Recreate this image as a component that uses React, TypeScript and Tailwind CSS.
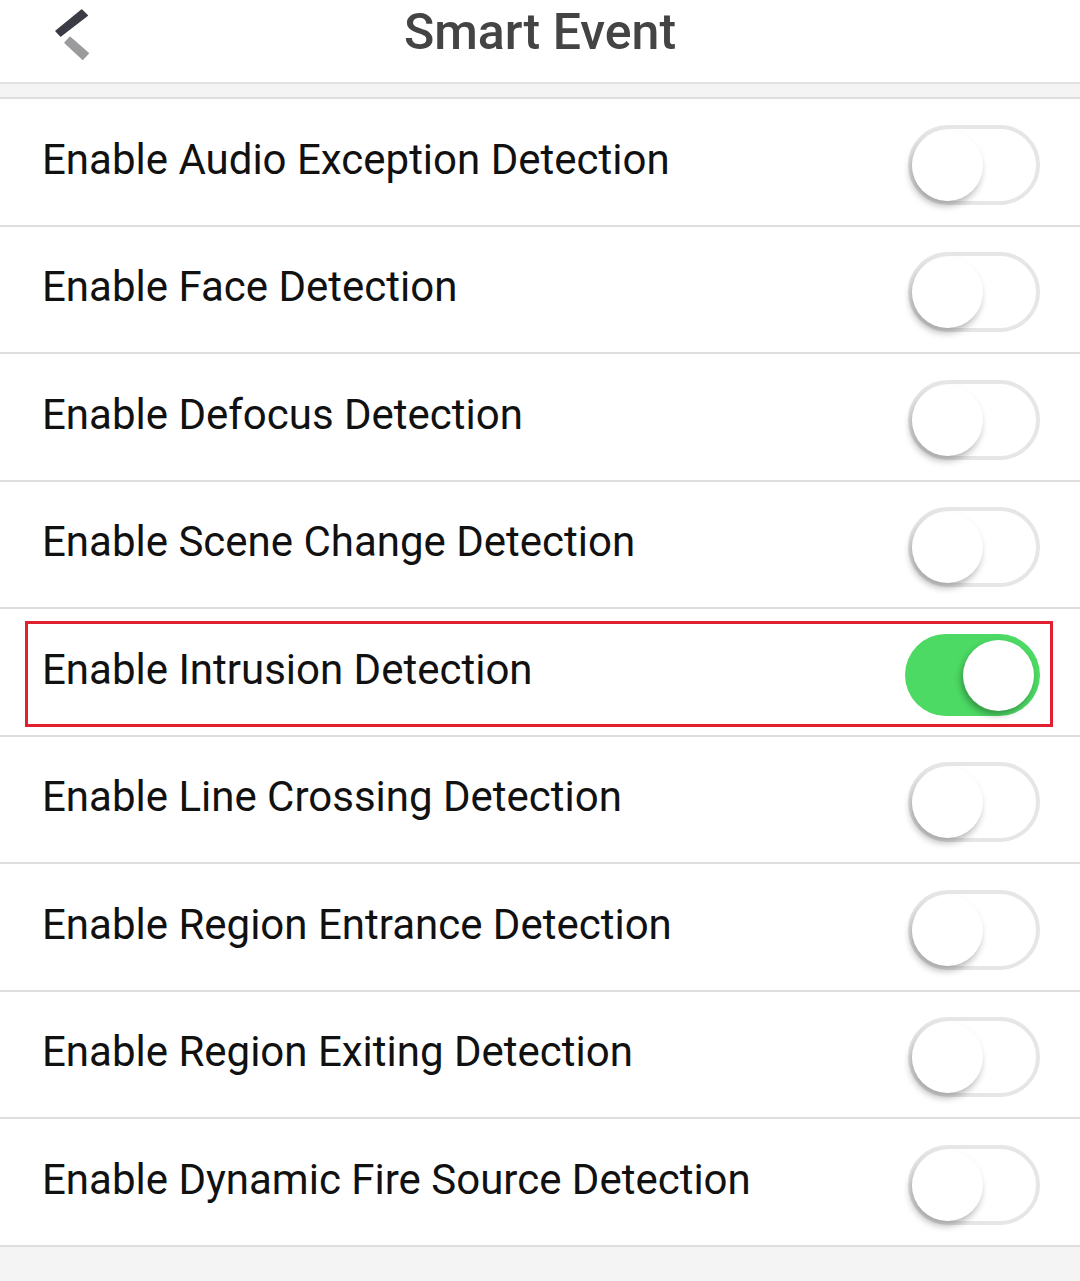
import React from 'react'

interface ToggleProps {
  on: boolean
}

const Toggle: React.FC<ToggleProps> = ({ on }) => {
  if (on) {
    return (
      <div className="relative h-[82px] w-[135px] shrink-0 rounded-full bg-[#4cd964]">
        <div className="absolute right-[6px] top-[6px] h-[71px] w-[71px] rounded-full bg-white shadow-[-2px_4px_6px_rgba(0,0,0,0.3)]" />
      </div>
    )
  }
  return (
    <div className="relative h-[80px] w-[132px] shrink-0 rounded-full border-4 border-[#e6e6e6] bg-white">
      <div className="absolute left-0 top-px h-[71px] w-[71px] rounded-full bg-white shadow-[-2px_5px_7px_rgba(0,0,0,0.28)]" />
    </div>
  )
}

const BackIcon = () => (
  <svg width="70" height="70" viewBox="0 0 70 70">
    <polygon points="16,31 41.7,10 47.3,15.5 20.7,36" fill="#3b3b45" stroke="#3b3b45" strokeWidth="1.5" strokeLinejoin="round" />
    <polygon points="30,37.3 48.3,53.3 42.7,59.3 25,42.7" fill="#9b9b9e" stroke="#9b9b9e" strokeWidth="1.5" strokeLinejoin="round" />
  </svg>
)

export default function App() {
  const settings = [
    { label: 'Enable Audio Exception Detection', on: false },
    { label: 'Enable Face Detection', on: false },
    { label: 'Enable Defocus Detection', on: false },
    { label: 'Enable Scene Change Detection', on: false },
    { label: 'Enable Intrusion Detection', on: true },
    { label: 'Enable Line Crossing Detection', on: false },
    { label: 'Enable Region Entrance Detection', on: false },
    { label: 'Enable Region Exiting Detection', on: false },
    { label: 'Enable Dynamic Fire Source Detection', on: false },
  ]

  return (
    <div className="h-[1281px] w-full bg-[#f4f4f4] font-['Roboto',sans-serif]">
      {/* Header */}
      <div className="grid h-[84px] grid-cols-[1fr_auto_1fr] items-start border-b-2 border-[#e2e2e2] bg-white">
        <div className="pl-[40px]">
          <BackIcon />
        </div>
        <h1 className="pt-[7px] text-[50px] font-medium leading-[50px] text-[#444444]">Smart Event</h1>
        <div />
      </div>

      <div className="h-[13px]" />

      {/* Settings list */}
      <div className="border-t-2 border-[#dedede] bg-white">
        {settings.map((item) => (
          <div
            key={item.label}
            className="relative flex h-[127.5px] items-center justify-between border-b-2 border-[#dedede] pl-[42px] pr-[40px]"
          >
            <span className="-mt-[4px] text-[42px] leading-none text-[#111111]">{item.label}</span>
            <div className="mt-[6px]">
              <Toggle on={item.on} />
            </div>
            {item.on && (
              <div className="pointer-events-none absolute bottom-[8px] left-[25px] right-[27px] top-[12px] border-[3px] border-[#e0202e]" />
            )}
          </div>
        ))}
      </div>
    </div>
  )
}
